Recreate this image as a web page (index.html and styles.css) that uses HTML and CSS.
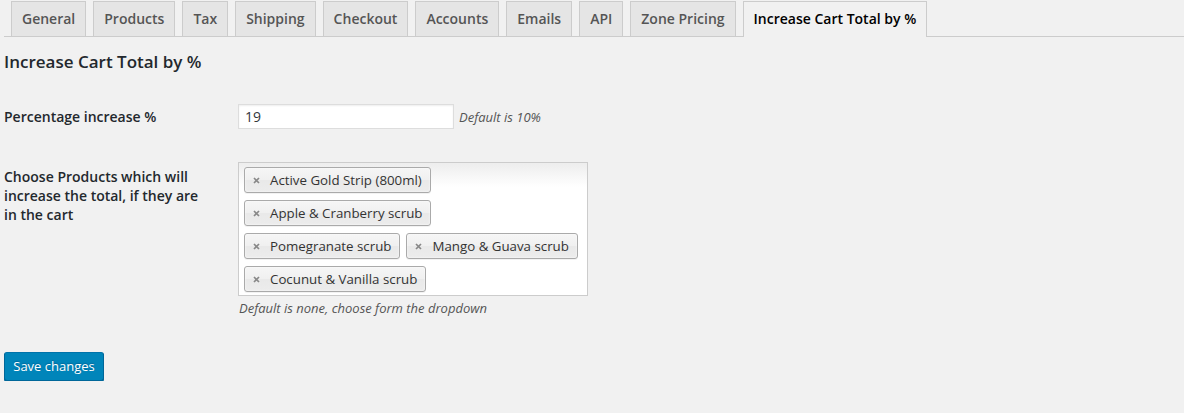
FILE: index.html
```html
<!DOCTYPE html>
<html lang="en">
<head>
<meta charset="utf-8">
<title>Increase Cart Total by %</title>
<link rel="stylesheet" href="styles.css">
</head>
<body>
<div class="wrap">
  <nav class="nav-tabs">
    <a class="nav-tab">General</a>
    <a class="nav-tab">Products</a>
    <a class="nav-tab">Tax</a>
    <a class="nav-tab">Shipping</a>
    <a class="nav-tab">Checkout</a>
    <a class="nav-tab">Accounts</a>
    <a class="nav-tab">Emails</a>
    <a class="nav-tab">API</a>
    <a class="nav-tab">Zone Pricing</a>
    <a class="nav-tab nav-tab-active">Increase Cart Total by %</a>
  </nav>

  <h2 class="section-title">Increase Cart Total by %</h2>

  <div class="field-row row-center">
    <label class="field-label">Percentage increase %</label>
    <div class="field-control inline">
      <input class="text-input" type="text" value="19">
      <span class="desc">Default is 10%</span>
    </div>
  </div>

  <div class="field-row row-top">
    <label class="field-label multi">Choose Products which will increase the total, if they are in the cart</label>
    <div class="field-control">
      <ul class="choices">
        <li class="choice"><span class="x"><svg width="7" height="7" viewBox="0 0 7 7"><path d="M1 1L6 6M6 1L1 6" stroke="#888" stroke-width="1.7"/></svg></span>Active Gold Strip (800ml)</li>
        <li class="choice"><span class="x"><svg width="7" height="7" viewBox="0 0 7 7"><path d="M1 1L6 6M6 1L1 6" stroke="#888" stroke-width="1.7"/></svg></span>Apple &amp; Cranberry scrub</li>
        <li class="choice"><span class="x"><svg width="7" height="7" viewBox="0 0 7 7"><path d="M1 1L6 6M6 1L1 6" stroke="#888" stroke-width="1.7"/></svg></span>Pomegranate scrub</li>
        <li class="choice"><span class="x"><svg width="7" height="7" viewBox="0 0 7 7"><path d="M1 1L6 6M6 1L1 6" stroke="#888" stroke-width="1.7"/></svg></span>Mango &amp; Guava scrub</li>
        <li class="choice"><span class="x"><svg width="7" height="7" viewBox="0 0 7 7"><path d="M1 1L6 6M6 1L1 6" stroke="#888" stroke-width="1.7"/></svg></span>Cocunut &amp; Vanilla scrub</li>
      </ul>
      <p class="desc block">Default is none, choose form the dropdown</p>
    </div>
  </div>

  <div class="submit-row">
    <button class="button-primary" type="button">Save changes</button>
  </div>
</div>
</body>
</html>
```

FILE: styles.css
```css
html, body {
  margin: 0;
  padding: 0;
  background: #f1f1f1;
}
body {
  font-family: "Open Sans", "Noto Sans", sans-serif;
  color: #23282d;
  font-size: 14px;
}
.wrap {
  padding: 1px 0 0 4px;
}
.nav-tabs {
  display: flex;
  border-bottom: 1px solid #ccc;
  height: 35px;
}
.nav-tab {
  margin-left: 7px;
  padding: 5px 10px;
  border: 1px solid #ccc;
  border-bottom: none;
  background: #e5e5e5;
  color: #555;
  font-weight: 600;
  font-size: 14px;
  line-height: 23px;
  white-space: nowrap;
}
.nav-tab-active {
  background: #f1f1f1;
  color: #000;
  height: 25px;
}
.section-title {
  margin: 13px 0 0;
  font-size: 17px;
  line-height: 24px;
  font-weight: 600;
  color: #23282d;
}
.field-row {
  display: grid;
  grid-template-columns: 234px 1fr;
}
.row-center {
  margin-top: 30px;
  align-items: center;
}
.row-top {
  margin-top: 33px;
  align-items: start;
}
.field-label {
  font-weight: 600;
  font-size: 14px;
  line-height: 19px;
  max-width: 200px;
  color: #23282d;
}
.field-label.multi {
  padding-top: 5px;
}
.field-control.inline {
  display: flex;
  align-items: center;
}
.text-input {
  box-sizing: border-box;
  width: 216px;
  height: 25px;
  margin: 0;
  padding: 2px 6px;
  border: 1px solid #ddd;
  box-shadow: inset 0 1px 2px rgba(0,0,0,.07);
  background: #fff;
  font-family: inherit;
  font-size: 14px;
  color: #32373c;
  outline: none;
}
.desc {
  font-style: italic;
  font-size: 13px;
  color: #555;
  margin-left: 5px;
}
.desc.block {
  margin: 3px 0 0 1px;
  line-height: 18px;
}
.choices {
  box-sizing: border-box;
  width: 350px;
  margin: 0;
  padding: 4px 5px 3px 5px;
  list-style: none;
  border: 1px solid #ccc;
  background: linear-gradient(to bottom, #eee 1%, #fff 18%);
  display: flex;
  flex-wrap: wrap;
  column-gap: 6px;
  row-gap: 7px;
  min-height: 134px;
  align-content: flex-start;
}
.choice {
  box-sizing: border-box;
  height: 26px;
  display: flex;
  align-items: center;
  padding: 0 8px 0 7px;
  border: 1px solid #aaa;
  border-radius: 3px;
  background: linear-gradient(to bottom, #f6f6f6 0%, #f0f0f0 50%, #e9e9e9 52%, #ececec 100%);
  box-shadow: inset 0 0 2px #fff, 0 1px 0 rgba(0,0,0,.05);
  font-size: 13.3px;
  color: #333;
  white-space: nowrap;
}
.x {
  display: inline-flex;
  width: 17px;
  height: 26px;
  align-items: center;
  justify-content: flex-start;
  padding-left: 1px;
}
.submit-row {
  margin-top: 35px;
}
.button-primary {
  box-sizing: border-box;
  height: 29px;
  width: 100px;
  padding: 0 8px 1px;
  border: 1px solid;
  border-color: #0073aa #006799 #006799;
  border-radius: 3px;
  background: #0085ba;
  box-shadow: 0 1px 0 #006799;
  color: #fff;
  font-family: inherit;
  font-size: 13px;
  line-height: 26px;
  text-shadow: 0 -1px 1px #006799;
}
```
